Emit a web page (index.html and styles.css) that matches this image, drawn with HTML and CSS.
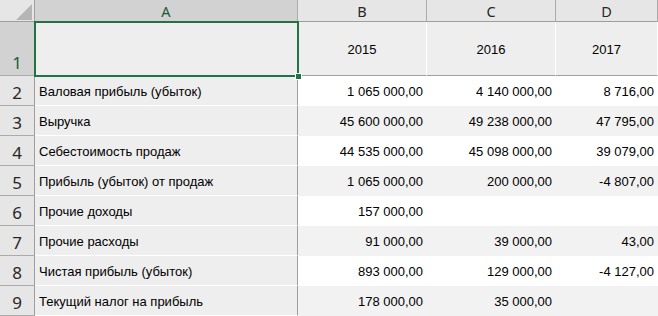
FILE: index.html
```html
<!DOCTYPE html>
<html lang="ru">
<head>
<meta charset="utf-8">
<title>Sheet</title>
<link rel="stylesheet" href="styles.css">
</head>
<body>
<div class="sheet">
  <div class="row head-row">
    <div class="corner"><span class="tri"></span></div>
    <div class="colhead sel">A</div>
    <div class="colhead">B</div>
    <div class="colhead">C</div>
    <div class="colhead">D</div>
  </div>
  <div class="row r1">
    <div class="rowhead sel">1</div>
    <div class="cell a"></div>
    <div class="cell y">2015</div>
    <div class="cell y">2016</div>
    <div class="cell y">2017</div>
  </div>
  <div class="row even">
    <div class="rowhead">2</div>
    <div class="cell a">Валовая прибыль (убыток)</div>
    <div class="cell n">1 065 000,00</div>
    <div class="cell n">4 140 000,00</div>
    <div class="cell n">8 716,00</div>
  </div>
  <div class="row odd">
    <div class="rowhead">3</div>
    <div class="cell a">Выручка</div>
    <div class="cell n">45 600 000,00</div>
    <div class="cell n">49 238 000,00</div>
    <div class="cell n">47 795,00</div>
  </div>
  <div class="row even">
    <div class="rowhead">4</div>
    <div class="cell a">Себестоимость продаж</div>
    <div class="cell n">44 535 000,00</div>
    <div class="cell n">45 098 000,00</div>
    <div class="cell n">39 079,00</div>
  </div>
  <div class="row odd">
    <div class="rowhead">5</div>
    <div class="cell a">Прибыль (убыток) от продаж</div>
    <div class="cell n">1 065 000,00</div>
    <div class="cell n">200 000,00</div>
    <div class="cell n">-4 807,00</div>
  </div>
  <div class="row even">
    <div class="rowhead">6</div>
    <div class="cell a">Прочие доходы</div>
    <div class="cell n">157 000,00</div>
    <div class="cell n"></div>
    <div class="cell n"></div>
  </div>
  <div class="row odd">
    <div class="rowhead">7</div>
    <div class="cell a">Прочие расходы</div>
    <div class="cell n">91 000,00</div>
    <div class="cell n">39 000,00</div>
    <div class="cell n">43,00</div>
  </div>
  <div class="row even">
    <div class="rowhead">8</div>
    <div class="cell a">Чистая прибыль (убыток)</div>
    <div class="cell n">893 000,00</div>
    <div class="cell n">129 000,00</div>
    <div class="cell n">-4 127,00</div>
  </div>
  <div class="row odd">
    <div class="rowhead">9</div>
    <div class="cell a">Текущий налог на прибыль</div>
    <div class="cell n">178 000,00</div>
    <div class="cell n">35 000,00</div>
    <div class="cell n"></div>
  </div>
  <div class="selection"><span class="handle"></span></div>
</div>
</body>
</html>
```

FILE: styles.css
```css
* { box-sizing: border-box; }
html, body { margin: 0; padding: 0; background: #ffffff; overflow: hidden; }
.sheet {
  position: relative;
  width: 658px;
  height: 316px;
  overflow: hidden;
  font-family: "Liberation Sans", Arial, sans-serif;
  font-size: 13px;
  color: #000;
}
.row {
  display: grid;
  grid-template-columns: 35px 263px 129px 129px 102px;
  height: 30px;
}
.head-row { height: 22px; }
.r1 { height: 54px; }

.corner {
  position: relative;
  background: #e6e6e6;
  border-right: 1px solid #9e9e9e;
  border-bottom: 1px solid #9e9e9e;
}
.tri {
  position: absolute;
  left: 16px;
  top: 4px;
  width: 16px;
  height: 16px;
  background: #b5b5b5;
  clip-path: polygon(100% 0, 100% 100%, 0 100%);
}
.colhead {
  display: flex;
  align-items: center;
  justify-content: center;
  background: #e6e6e6;
  border-right: 1px solid #ababab;
  border-bottom: 1px solid #9e9e9e;
  font-family: "Noto Sans", "Open Sans", sans-serif;
  font-size: 14.5px;
  color: #262626;
  padding-top: 1px;
}
.colhead.sel { background: #d2d2d2; color: #185c37; }

.rowhead {
  display: flex;
  align-items: flex-end;
  justify-content: center;
  background: #e6e6e6;
  border-right: 1px solid #9e9e9e;
  border-bottom: 1px solid #ababab;
  font-family: "Noto Sans", "Open Sans", sans-serif;
  font-size: 17px;
  color: #262626;
  padding-bottom: 1px;
  line-height: 22px;
}
.rowhead.sel { background: #d2d2d2; color: #185c37; }

.cell {
  display: flex;
  align-items: center;
  white-space: nowrap;
  border-bottom: 1px solid transparent;
  padding-top: 1px;
}
.cell.a {
  background: #eeeeee;
  border-right: 1px solid #9e9e9e;
  border-bottom: 1px solid #ffffff;
  padding-left: 4px;
}
.r1 .cell { background: #eeeeee; border-bottom: 1px solid #a0a0a0; }
.r1 .cell.a { border-bottom-color: #eeeeee; }
.cell.y {
  justify-content: center;
  border-right: 1px solid #ffffff;
}
.cell.n {
  justify-content: flex-end;
  padding-right: 3px;
  border-right: 1px solid transparent;
}
.even .cell.n { background: #ffffff; }
.odd .cell.n { background: #f2f2f2; }

.selection {
  position: absolute;
  left: 34px;
  top: 21px;
  width: 265px;
  height: 56px;
  border: 2px solid #217346;
  pointer-events: none;
}
.handle {
  position: absolute;
  right: -5px;
  bottom: -5px;
  width: 7px;
  height: 7px;
  background: #217346;
  border: 1px solid #ffffff;
}
```
